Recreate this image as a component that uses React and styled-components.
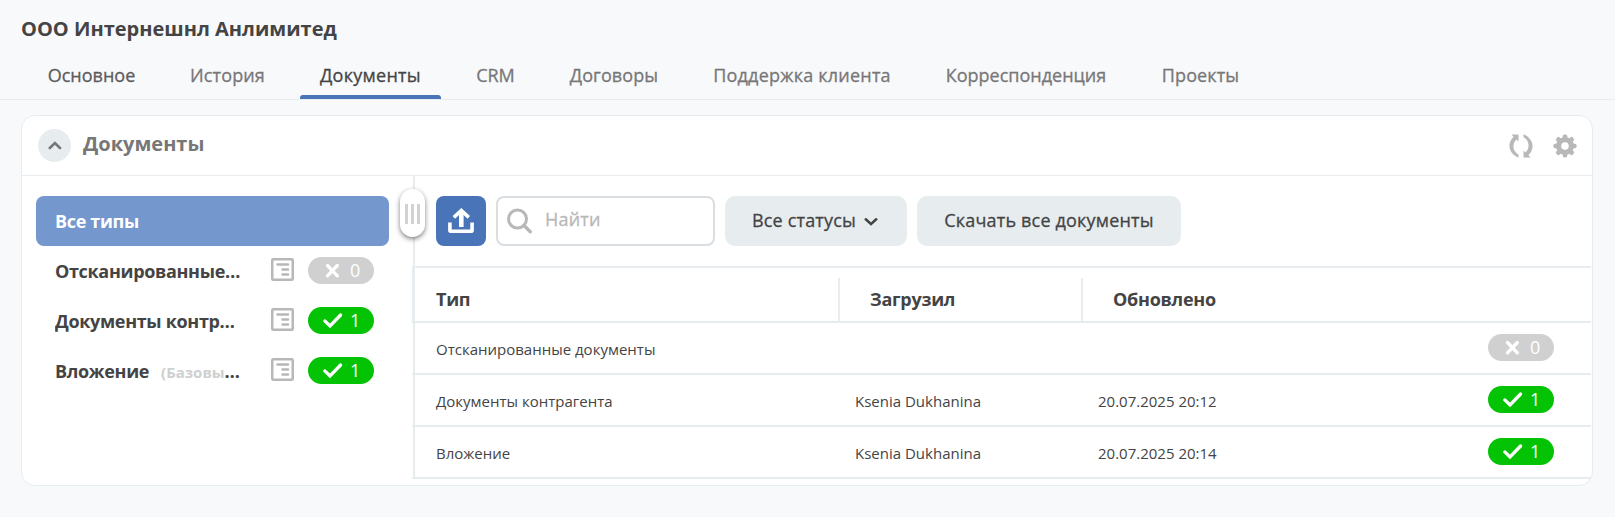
import React from "react";
import styled, { createGlobalStyle } from "styled-components";

const line = "#e7ecef";
const ink = "#444444";
const muted = "#b8b8b8";

const GlobalStyle = createGlobalStyle`
  *, *::before, *::after { box-sizing: border-box; }
  body {
    margin: 0;
    background: #f8f9fb;
    color: ${ink};
    font-family: "Open Sans", "Noto Sans", sans-serif;
  }
  button, input { font: inherit; color: inherit; }
`;

const Page = styled.main`
  height: 517px;
  overflow: hidden;
`;

const PageTitle = styled.h1`
  margin: 0;
  padding: 14px 0 0 21px;
  font-size: 20px;
  line-height: 30px;
  font-weight: 700;
`;

const Tabs = styled.nav`
  display: flex;
  height: 56px;
  padding-left: 28px;
  gap: 16px;
  border-bottom: 1px solid ${line};
`;

const Tab = styled.a`
  flex: none;
  display: flex;
  flex-direction: column;
  width: ${(p) => p.$width}px;
  height: 55px;
  padding-top: 18px;
  text-align: center;
  white-space: nowrap;
  font-size: 18px;
  line-height: 26px;
  font-weight: 500;
  letter-spacing: ${(p) => p.$tracking || 0}px;
  color: ${(p) => (p.$active ? ink : p.$dark ? "#5c5c5c" : "#777777")};
  -webkit-text-stroke: 0.3px currentColor;

  &::after {
    content: "";
    height: 4px;
    margin-top: auto;
    border-radius: 3px 3px 0 0;
    background: ${(p) => (p.$active ? "#4a74b8" : "transparent")};
  }
`;

const Card = styled.section`
  margin: 15px 22px 0 21px;
  height: 371px;
  border: 1px solid ${line};
  border-radius: 14px;
  background: #fff;
  overflow: hidden;
`;

const CardHeader = styled.header`
  display: flex;
  align-items: center;
  height: 60px;
  padding: 0 15px 0 16px;
  border-bottom: 1px solid ${line};
`;

const Collapse = styled.button`
  display: grid;
  place-items: center;
  width: 33px;
  height: 33px;
  padding: 0;
  border: 0;
  border-radius: 50%;
  background: #e7ecef;
`;

const CardTitle = styled.h2`
  flex: 1;
  margin: -4px 0 0 12px;
  font-size: 20px;
  line-height: 28px;
  font-weight: 700;
  color: #777777;
`;

const HeaderIcons = styled.div`
  display: flex;
  gap: 20px;
`;

const Icon = styled.svg`
  display: block;
  flex: none;
`;

const CardBody = styled.div`
  display: flex;
  height: 309px;
`;

const Sidebar = styled.aside`
  width: 391px;
  flex: none;
  padding: 20px 24px 0 14px;
`;

const TypeRow = styled.div`
  display: flex;
  align-items: center;
  height: 50px;
  padding: 0 15px 0 19px;
  border-radius: 8px;
  font-size: 18px;
  line-height: 26px;
  font-weight: 700;
  letter-spacing: -0.33px;
  background: ${(p) => (p.$selected ? "#7497cd" : "transparent")};
  color: ${(p) => (p.$selected ? "#fff" : ink)};
`;

const TypeLabel = styled.div`
  flex: 1;
  margin-right: 28px;
  overflow: hidden;
  white-space: nowrap;
  text-overflow: ellipsis;
`;

const TypeNote = styled.span`
  margin-left: 12px;
  font-size: 15px;
  letter-spacing: 0;
  color: #cfcfcf;
`;

const RowTools = styled.div`
  display: flex;
  align-items: center;
  gap: 14px;
  margin-top: -1px;
`;

const Pill = styled.span`
  display: flex;
  align-items: center;
  width: 66px;
  height: 27px;
  padding-left: 14px;
  gap: 7px;
  border-radius: 14px;
  background: ${(p) => (p.$ok ? "#04c204" : "#d0d0d0")};
  color: #fff;
  font-size: 18px;
  line-height: 27px;
  font-weight: 400;
`;

const Main = styled.div`
  position: relative;
  flex: 1;
  min-width: 0;
  padding-right: 1px;
  &::before {
    content: "";
    position: absolute;
    left: 0;
    top: 0;
    width: 2px;
    height: 303px;
    background: ${line};
  }
`;

const Handle = styled.div`
  position: absolute;
  z-index: 1;
  left: -13px;
  top: 13px;
  display: flex;
  align-items: center;
  justify-content: center;
  gap: 3px;
  width: 25px;
  height: 48px;
  padding-top: 2px;
  border-radius: 13px;
  background: #fff;
  box-shadow: 0 2px 5px rgba(0, 0, 0, 0.5);
`;

const Grip = styled.i`
  width: 3px;
  height: 20px;
  background: #d2d2d4;
`;

const Toolbar = styled.div`
  display: flex;
  gap: 10px;
  height: 90px;
  padding: 20px 0 0 23px;
`;

const UploadButton = styled.button`
  display: grid;
  place-items: center;
  width: 50px;
  height: 50px;
  padding: 0;
  border: 0;
  border-radius: 8px;
  background: #4a74b8;
`;

const Search = styled.label`
  display: flex;
  align-items: center;
  width: 219px;
  height: 50px;
  padding-left: 9px;
  border: 2px solid #d9dee2;
  border-radius: 8px;
  background: #fff;
`;

const SearchInput = styled.input`
  flex: 1;
  min-width: 0;
  margin: -4px 0 0 12px;
  padding: 0;
  border: 0;
  outline: 0;
  background: transparent;
  font-size: 18px;
  line-height: 26px;
  font-weight: 500;
  letter-spacing: 0.2px;
  &::placeholder {
    color: ${muted};
    opacity: 1;
    -webkit-text-stroke: 0.3px ${muted};
  }
`;

const Button = styled.button`
  display: flex;
  align-items: center;
  justify-content: center;
  gap: 8px;
  width: ${(p) => p.$width}px;
  height: 50px;
  padding: 0 ${(p) => (p.$menu ? 2 : 0)}px 2px 0;
  border: 0;
  border-radius: 10px;
  background: #e7ecef;
  font-size: 18px;
  font-weight: 500;
  letter-spacing: 0.19px;
  -webkit-text-stroke: 0.3px currentColor;
  white-space: nowrap;
`;

const Table = styled.div`
  margin-left: -1px;
  border-top: 2px solid ${line};
`;

const HeadRow = styled.div`
  display: grid;
  grid-template-columns: 426px 243px 1fr;
  height: 55px;
  padding-top: 10px;
  border-bottom: 2px solid ${line};
  box-shadow: inset 2px 0 ${line};
`;

const HeadCell = styled.div`
  padding-left: ${(p) => (p.$first ? 24 : 30)}px;
  border-left: ${(p) => (p.$first ? "0" : `2px solid ${line}`)};
  font-size: 18px;
  line-height: 43px;
  font-weight: 700;
  letter-spacing: -0.27px;
`;

const Row = styled.div`
  display: grid;
  grid-template-columns: 443px 243px 390px 66px;
  height: 52px;
  border-bottom: 2px solid ${line};
`;

const Cell = styled.div`
  padding-left: ${(p) => (p.$first ? 24 : 0)}px;
  font-size: 15px;
  line-height: 52px;
  white-space: nowrap;
`;

const PillCell = styled.div`
  padding-top: 11px;
`;

function Chevron({ up, color }) {
  return (
    <Icon width="14" height="14" viewBox="0 0 14 14" fill="none" stroke={color} strokeWidth="2.600" strokeLinecap="round">
      <path d={up ? "M1.800 9 6.900 4l5.100 5" : "M1.800 6.300 7 11.100l5.200-4.800"} />
    </Icon>
  );
}

function RefreshIcon() {
  return (
    <Icon width="24" height="24" viewBox="0 0 24 24" fill={muted}>
      <path d="M2.500 .5h7v7L7.500 5.600C2.800 10 3.500 17.500 9.500 20.700v3C-1.200 19.200-1.900 8.400 4.700 3z" />
      <path d="M21.500 23.500h-7v-7l2 1.900C21.200 14 20.500 6.500 14.500 3.300v-3C25.200 4.800 25.900 15.600 19.300 21z" />
    </Icon>
  );
}

function GearIcon() {
  return (
    <Icon width="24" height="24" viewBox="0 0 24 24">
      <g fill={muted}>
        <circle cx="12" cy="12" r="9" />
        {[0, 45, 90, 135].map((a) => (
          <rect key={a} x="9.700" y=".4" width="4.600" height="23.200" rx="1.800" transform={`rotate(${a} 12 12)`} />
        ))}
      </g>
      <circle cx="12" cy="12" r="3.800" fill="#fff" />
    </Icon>
  );
}

const FormSvg = styled(Icon)`
  margin-top: -2px;
`;

function FormIcon() {
  return (
    <FormSvg width="23" height="23" viewBox="0 0 23 23" fill="none" stroke={muted}>
      <rect x="1.250" y="1.250" width="20.500" height="20.500" rx="1" strokeWidth="2.500" />
      <path d="M6.500 6.500h10.500M11.500 11.500h5.500M11.500 16.500h5.500" strokeWidth="2.500" strokeLinecap="round" />
    </FormSvg>
  );
}

function UploadIcon() {
  return (
    <Icon width="26" height="26" viewBox="0 0 26 26" fill="none" stroke="#fff">
      <path d="M1.900 14.500v7.700q0 1 1 1h20.200q1 0 1-1v-7.700" strokeWidth="3.600" />
      <path d="M13.300 19V3" strokeWidth="4.600" />
      <path d="m5.800 9.300 7.500-6.800 7.500 6.800" strokeWidth="3.600" />
    </Icon>
  );
}

function SearchIcon() {
  return (
    <Icon width="26" height="26" viewBox="0 0 26 26" fill="none" stroke={muted} strokeWidth="3">
      <circle cx="10.500" cy="11" r="9" />
      <path d="m17 17.500 6.300 6.300" strokeWidth="3.400" strokeLinecap="round" />
    </Icon>
  );
}

function Count({ value }) {
  const ok = value > 0;
  return (
    <Pill $ok={ok}>
      <Icon width="21" height="17" viewBox="0 0 21 17" fill="none" stroke="#fff" strokeWidth="3.300" strokeLinecap="round">
        <path d={ok ? "M2.800 8.900 8 14 18.600 3" : "m5.500 3.500 9.800 10.300M15.300 3.500 5.500 13.800"} />
      </Icon>
      {value}
    </Pill>
  );
}

const tabs = [
  { label: "Основное", width: 127, dark: true },
  { label: "История", width: 113, tracking: 0.12 },
  { label: "Документы", width: 141, active: true, tracking: 0.28 },
  { label: "CRM", width: 77 },
  { label: "Договоры", width: 128, tracking: 0.1 },
  { label: "Поддержка клиента", width: 216, tracking: 0.22 },
  { label: "Корреспонденция", width: 200 },
  { label: "Проекты", width: 117, tracking: 0.1 },
];

const types = [
  { label: "Отсканированные документы", count: 0 },
  { label: "Документы контрагента", count: 1 },
  { label: "Вложение", note: "(Базовый тип)", count: 1 },
];

const rows = [
  { type: "Отсканированные документы", author: "", date: "", count: 0 },
  { type: "Документы контрагента", author: "Ksenia Dukhanina", date: "20.07.2025 20:12", count: 1 },
  { type: "Вложение", author: "Ksenia Dukhanina", date: "20.07.2025 20:14", count: 1 },
];

export default function App() {
  return (
    <Page>
      <GlobalStyle />
      <PageTitle>ООО Интернешнл Анлимитед</PageTitle>
      <Tabs>
        {tabs.map((t) => (
          <Tab key={t.label} $width={t.width} $active={t.active} $dark={t.dark} $tracking={t.tracking}>
            {t.label}
          </Tab>
        ))}
      </Tabs>
      <Card>
        <CardHeader>
          <Collapse aria-label="Свернуть"><Chevron up color="#777777" /></Collapse>
          <CardTitle>Документы</CardTitle>
          <HeaderIcons><RefreshIcon /><GearIcon /></HeaderIcons>
        </CardHeader>
        <CardBody>
          <Sidebar>
            <TypeRow $selected>Все типы</TypeRow>
            {types.map((t) => (
              <TypeRow key={t.label}>
                <TypeLabel>
                  {t.label}
                  {t.note && <TypeNote>{t.note}</TypeNote>}
                </TypeLabel>
                <RowTools><FormIcon /><Count value={t.count} /></RowTools>
              </TypeRow>
            ))}
          </Sidebar>
          <Main>
            <Handle><Grip /><Grip /><Grip /></Handle>
            <Toolbar>
              <UploadButton aria-label="Загрузить"><UploadIcon /></UploadButton>
              <Search><SearchIcon /><SearchInput placeholder="Найти" /></Search>
              <Button $width={182} $menu>Все статусы <Chevron color={ink} /></Button>
              <Button $width={264}>Скачать все документы</Button>
            </Toolbar>
            <Table>
              <HeadRow>
                <HeadCell $first>Тип</HeadCell>
                <HeadCell>Загрузил</HeadCell>
                <HeadCell>Обновлено</HeadCell>
              </HeadRow>
              {rows.map((r) => (
                <Row key={r.type}>
                  <Cell $first>{r.type}</Cell>
                  <Cell>{r.author}</Cell>
                  <Cell>{r.date}</Cell>
                  <PillCell><Count value={r.count} /></PillCell>
                </Row>
              ))}
            </Table>
          </Main>
        </CardBody>
      </Card>
    </Page>
  );
}
